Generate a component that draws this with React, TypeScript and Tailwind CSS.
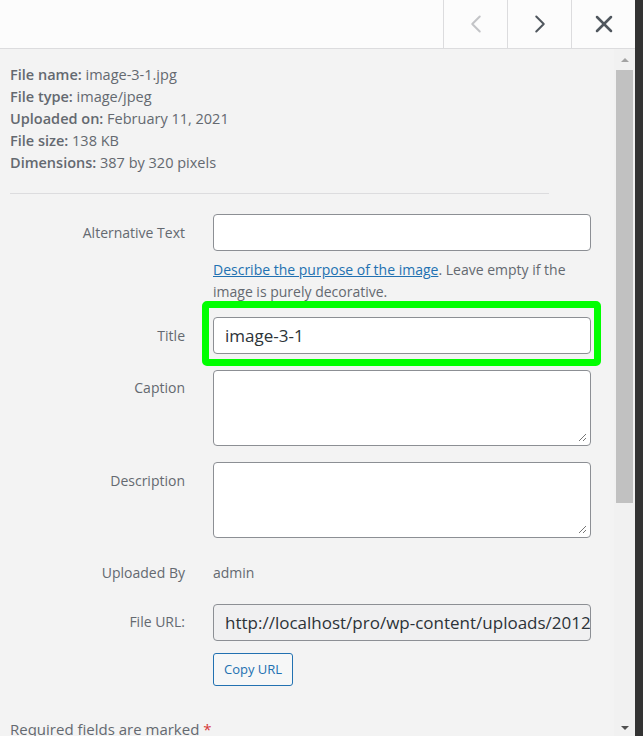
import { ChevronLeft, ChevronRight, X } from 'lucide-react';

const font = { fontFamily: '"Open Sans", "Noto Sans", sans-serif' };

function Label({ children }: { children: React.ReactNode }) {
  return <div className="w-[185px] shrink-0 text-right text-[14px] leading-[20px] text-[#646970]">{children}</div>;
}

function Resize() {
  return (
    <svg className="absolute right-[3px] bottom-[3px]" width="9" height="9" viewBox="0 0 9 9">
      <path d="M8 1 L1 8 M8 5 L5 8" stroke="#777" strokeWidth="1" />
    </svg>
  );
}

export default function App() {
  return (
    <div className="w-[643px] h-[736px] flex bg-[#333] overflow-hidden text-[#3c434a]" style={font}>
      <div className="w-[635px] h-full flex flex-col bg-[#f3f3f3]">
        {/* modal header with navigation */}
        <div className="h-[49px] shrink-0 bg-[#fcfcfc] border-b border-[#dcdcde] flex justify-end">
          <button className="w-[64px] h-full border-l border-[#dcdcde] flex items-center justify-center text-[#c3c4c7]">
            <ChevronLeft className="w-[30px] h-[30px]" strokeWidth={1.6} />
          </button>
          <button className="w-[64px] h-full border-l border-[#dcdcde] flex items-center justify-center text-[#50575e]">
            <ChevronRight className="w-[30px] h-[30px]" strokeWidth={1.6} />
          </button>
          <button className="w-[64px] h-full border-l border-[#dcdcde] flex items-center justify-center text-[#50575e]">
            <X className="w-[28px] h-[28px]" strokeWidth={2.2} />
          </button>
        </div>

        <div className="flex flex-1 min-h-0">
          <div className="w-[614px] overflow-hidden">
            {/* file details */}
            <div className="pl-[10px] pt-[15px] text-[14.5px] leading-[22px] text-[#646970]">
              <div><b className="font-semibold">File name:</b> image-3-1.jpg</div>
              <div><b className="font-semibold">File type:</b> image/jpeg</div>
              <div><b className="font-semibold">Uploaded on:</b> February 11, 2021</div>
              <div><b className="font-semibold">File size:</b> 138 KB</div>
              <div><b className="font-semibold">Dimensions:</b> 387 by 320 pixels</div>
            </div>
            <div className="ml-[10px] w-[539px] mt-[19px] border-t border-[#dcdcde]" />

            {/* attachment fields */}
            <div className="pt-[20px]">
              <div className="flex gap-[28px]">
                <Label><div className="pt-[9px]">Alternative Text</div></Label>
                <div className="w-[378px]">
                  <input className="block w-full h-[37px] bg-white border border-[#8c8f94] rounded-[4px] outline-none" />
                  <p className="mt-[8px] text-[14px] leading-[22px] text-[#646970]">
                    <a className="text-[#2271b1] underline">Describe the purpose of the image</a>. Leave empty if the image is purely decorative.
                  </p>
                </div>
              </div>

              <div className="flex gap-[28px] mt-[14px] items-center">
                <Label>Title</Label>
                <div className="relative w-[378px] h-[37px]">
                  <div className="absolute -left-[11px] -right-[10px] -top-[16px] -bottom-[12px] border-[7px] border-[#00ff00] rounded-[5px]" />
                  <input
                    readOnly
                    value="image-3-1"
                    className="relative block w-full h-full bg-white border border-[#8c8f94] rounded-[4px] px-[11px] text-[17px] text-[#2c3338] outline-none"
                    style={font}
                  />
                </div>
              </div>

              <div className="flex gap-[28px] mt-[16px]">
                <Label><div className="pt-[8px]">Caption</div></Label>
                <div className="relative w-[378px] h-[76px] bg-white border border-[#8c8f94] rounded-[4px]">
                  <Resize />
                </div>
              </div>

              <div className="flex gap-[28px] mt-[16px]">
                <Label><div className="pt-[9px]">Description</div></Label>
                <div className="relative w-[378px] h-[76px] bg-white border border-[#8c8f94] rounded-[4px]">
                  <Resize />
                </div>
              </div>

              <div className="flex gap-[28px] mt-[25px]">
                <Label>Uploaded By</Label>
                <div className="text-[14px] leading-[20px] text-[#646970]">admin</div>
              </div>

              <div className="flex gap-[28px] mt-[21px]">
                <Label><div className="pt-[8px]">File URL:</div></Label>
                <div className="w-[378px]">
                  <input
                    readOnly
                    value="http://localhost/pro/wp-content/uploads/2012/02/image-3-1.jpg"
                    className="block w-full h-[37px] bg-[#f0f0f1] border border-[#8c8f94] rounded-[4px] pl-[11px] text-[17px] text-[#2c3338] outline-none"
                    style={font}
                  />
                  <button className="mt-[12px] h-[33px] px-[10px] bg-[#f6f7f7] border border-[#2271b1] rounded-[3px] text-[13px] text-[#2271b1]">
                    Copy URL
                  </button>
                </div>
              </div>
            </div>

            <div className="pl-[10px] mt-[32px] text-[15px] leading-[22px] text-[#646970]">
              Required fields are marked <span className="text-[#d63638]">*</span>
            </div>
          </div>

          {/* scrollbar */}
          <div className="w-[21px] h-full bg-[#f1f1f1] flex flex-col items-center">
            <div className="h-[21px] w-full flex items-center justify-center">
              <div className="w-0 h-0 border-l-[4px] border-r-[4px] border-b-[4px] border-l-transparent border-r-transparent border-b-[#a3a3a3]" />
            </div>
            <div className="w-[17px] h-[433px] bg-[#c1c1c1]" />
            <div className="flex-1" />
            <div className="h-[17px] w-full flex items-center justify-center">
              <div className="w-0 h-0 border-l-[4px] border-r-[4px] border-t-[4px] border-l-transparent border-r-transparent border-t-[#505050]" />
            </div>
          </div>
        </div>
      </div>
    </div>
  );
}
